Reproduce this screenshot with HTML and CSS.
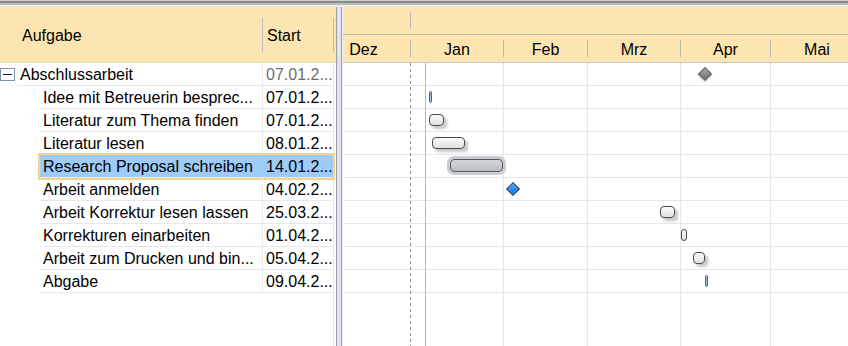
FILE: index.html
```html
<!DOCTYPE html>
<html lang="de">
<head>
    <meta charset="UTF-8">
    <title>Abschlussarbeit - Gantt</title>
    <link rel="stylesheet" href="styles.css">
</head>
<body>
    <div class="topbar"></div>
    <div class="main">
        <div class="left">
            <div class="lhead">
                <div class="hcell task">Aufgabe</div>
                <div class="hsep"></div>
                <div class="hcell start">Start</div>
                <div class="hsep"></div>
            </div>
            <div class="lbody">
                <div class="grid">
                    <div class="trow">
                        <div class="indent root"><span class="toggle"></span></div>
                        <div class="cells">
                            <div class="name">Abschlussarbeit</div>
                            <div class="date muted">07.01.2...</div>
                        </div>
                    </div>
                    <div class="trow">
                        <div class="indent"></div>
                        <div class="cells">
                            <div class="name">Idee mit Betreuerin besprec...</div>
                            <div class="date">07.01.2...</div>
                        </div>
                    </div>
                    <div class="trow">
                        <div class="indent"></div>
                        <div class="cells">
                            <div class="name">Literatur zum Thema finden</div>
                            <div class="date">07.01.2...</div>
                        </div>
                    </div>
                    <div class="trow">
                        <div class="indent"></div>
                        <div class="cells">
                            <div class="name">Literatur lesen</div>
                            <div class="date">08.01.2...</div>
                        </div>
                    </div>
                    <div class="trow selected">
                        <div class="indent"></div>
                        <div class="cells">
                            <div class="name">Research Proposal schreiben</div>
                            <div class="date">14.01.2...</div>
                        </div>
                    </div>
                    <div class="trow">
                        <div class="indent"></div>
                        <div class="cells">
                            <div class="name">Arbeit anmelden</div>
                            <div class="date">04.02.2...</div>
                        </div>
                    </div>
                    <div class="trow">
                        <div class="indent"></div>
                        <div class="cells">
                            <div class="name">Arbeit Korrektur lesen lassen</div>
                            <div class="date">25.03.2...</div>
                        </div>
                    </div>
                    <div class="trow">
                        <div class="indent"></div>
                        <div class="cells">
                            <div class="name">Korrekturen einarbeiten</div>
                            <div class="date">01.04.2...</div>
                        </div>
                    </div>
                    <div class="trow">
                        <div class="indent"></div>
                        <div class="cells">
                            <div class="name">Arbeit zum Drucken und bin...</div>
                            <div class="date">05.04.2...</div>
                        </div>
                    </div>
                    <div class="trow">
                        <div class="indent"></div>
                        <div class="cells">
                            <div class="name">Abgabe</div>
                            <div class="date">09.04.2...</div>
                        </div>
                    </div>
                </div>
            </div>
        </div>

        <div class="splitter"></div>

        <div class="right">
            <div class="rhead">
                <div class="scale-top">
                    <div class="year-pad"></div>
                    <div class="vsep"></div>
                </div>
                <div class="scale-months">
                    <div class="month" style="width:93px">Dez</div>
                    <div class="vsep"></div>
                    <div class="month" style="width:92px">Jan</div>
                    <div class="vsep"></div>
                    <div class="month" style="width:83px">Feb</div>
                    <div class="vsep"></div>
                    <div class="month" style="width:92px">Mrz</div>
                    <div class="vsep"></div>
                    <div class="month" style="width:89px">Apr</div>
                    <div class="vsep"></div>
                    <div class="month" style="width:92px">Mai</div>
                </div>
            </div>
            <div class="rbody">
                <div class="grow"><div class="ms summary" style="left:357px"></div></div>
                <div class="grow"><div class="bar thin" style="left:86px;width:3px"></div></div>
                <div class="grow"><div class="bar" style="left:86px;width:15px"></div></div>
                <div class="grow"><div class="bar" style="left:89px;width:33px"></div></div>
                <div class="grow"><div class="bar sel" style="left:107px;width:53px"></div></div>
                <div class="grow"><div class="ms blue" style="left:165px"></div></div>
                <div class="grow"><div class="bar" style="left:317px;width:15px"></div></div>
                <div class="grow"><div class="bar small" style="left:338px;width:6px"></div></div>
                <div class="grow"><div class="bar" style="left:350px;width:12px"></div></div>
                <div class="grow"><div class="bar thin" style="left:362px;width:3px"></div></div>

                <div class="vline dash" style="left:67px"></div>
                <div class="vline today" style="left:82px"></div>
                <div class="vline" style="left:160px"></div>
                <div class="vline" style="left:244px"></div>
                <div class="vline" style="left:337px"></div>
                <div class="vline" style="left:427px"></div>
            </div>
        </div>
    </div>
</body>
</html>
```

FILE: styles.css
```css
body {
    margin: 0;
    width: 848px;
    height: 346px;
    overflow: hidden;
    font-family: "Liberation Sans", Arial, sans-serif;
    font-size: 16px;
    color: #000;
    background: #fff;
}
.topbar {
    height: 7px;
    background: linear-gradient(to bottom, #d0d0d0 0 1px, #8a8a8a 1px 3px, #bdbdbd 3px 5px, #ececec 5px 7px);
}
.main {
    display: flex;
    height: 339px;
}

/* linke Tabelle */
.left {
    width: 336px;
    display: flex;
    flex-direction: column;
}
.lhead {
    height: 55px;
    border-bottom: 1px solid #e6dcc0;
    background: #fde5b1;
    display: flex;
    align-items: center;
}
.hcell {
    box-sizing: border-box;
    white-space: nowrap;
    padding-top: 2px;
}
.hcell.task {
    width: 262px;
    padding-left: 22px;
}
.hcell.start {
    width: 70px;
    padding-left: 4px;
}
.hsep {
    width: 1px;
    height: 34px;
    background: #bcbcbc;
}
.lbody {
    flex: 1;
}
.grid {
    width: 333px;
    height: 100%;
    border-right: 1px solid #e6e6e6;
}
.trow {
    display: flex;
    height: 23px;
}
.indent {
    width: 40px;
    flex: none;
}
.indent.root {
    width: 17px;
    display: flex;
    align-items: center;
}
.toggle {
    box-sizing: border-box;
    width: 15px;
    height: 13px;
    margin-top: -1px;
    border: 1px solid #8193ab;
    background: #fff;
    display: flex;
    align-items: center;
    justify-content: center;
}
.toggle::before {
    content: "";
    width: 9px;
    height: 1px;
    background: #222;
}
.cells {
    flex: 1;
    display: flex;
    box-sizing: border-box;
    border-bottom: 1px solid #e8e8e8;
}
.name {
    flex: 1;
    padding-top: 2px;
    padding-left: 3px;
    line-height: 20px;
    white-space: nowrap;
    overflow: hidden;
}
.date {
    width: 71px;
    box-sizing: border-box;
    border-left: 1px solid #ececec;
    padding-top: 2px;
    padding-left: 3px;
    line-height: 20px;
    white-space: nowrap;
    overflow: hidden;
}
.date.muted {
    color: #6e6e6e;
}
.trow.selected .cells {
    background: #9dcbfa;
    outline: 2px solid #f4d38a;
}
.trow.selected .date {
    border-left-color: #9dcbfa;
}

.splitter {
    width: 7px;
    flex: none;
    background: linear-gradient(to right, #9c9ca8 0 1px, #e3e3e9 1px 5px, #9c9ca8 5px 6px, #f2f2f5 6px 7px);
}

/* Gantt */
.right {
    flex: 1;
    display: flex;
    flex-direction: column;
    overflow: hidden;
}
.rhead {
    height: 55px;
    border-bottom: 1px solid #c4c4c4;
    background: #fde5b1;
}
.scale-top {
    height: 27px;
    border-bottom: 1px solid #b8b8b8;
    display: flex;
    align-items: center;
}
.year-pad {
    width: 67px;
}
.vsep {
    width: 1px;
    height: 17px;
    flex: none;
    background: #b8b8b8;
}
.scale-months {
    height: 27px;
    margin-left: -26px;
    display: flex;
    align-items: center;
}
.month {
    flex: none;
    padding-top: 2px;
    text-align: center;
    white-space: nowrap;
}
.rbody {
    flex: 1;
    position: relative;
    overflow: hidden;
}
.grow {
    height: 23px;
    box-sizing: border-box;
    border-bottom: 1px solid #e6e6ec;
    position: relative;
}
.vline {
    position: absolute;
    top: 0;
    bottom: 0;
    width: 1px;
    background: #e4e4ea;
    z-index: 1;
}
.vline.dash {
    background: repeating-linear-gradient(to bottom, #8c8c9c 0 3px, transparent 3px 6px);
}
.vline.today {
    background: #f0a868;
}
.bar {
    position: absolute;
    top: 5px;
    height: 12px;
    box-sizing: border-box;
    border: 1px solid #4a4a4a;
    border-radius: 4px;
    background: linear-gradient(to bottom, #fbfbfb, #e0e0e0);
    box-shadow: 3px 3px 3px rgba(0, 0, 0, 0.22);
    z-index: 2;
}
.bar.thin {
    border-radius: 2px;
    border-color: #56667e;
    background: #a3b7d6;
    box-shadow: none;
}
.bar.small {
    border-radius: 3px;
    box-shadow: none;
}
.bar.sel {
    top: 4px;
    height: 13px;
    border-color: #555;
    background: linear-gradient(to bottom, #d2d5da, #babdc3);
    box-shadow: 0 0 0 3px #c9ccd2;
}
.ms {
    position: absolute;
    top: 6px;
    width: 10px;
    height: 10px;
    box-sizing: border-box;
    transform: rotate(45deg);
    z-index: 2;
}
.ms.summary {
    border: 1px solid #3a3a3a;
    background: linear-gradient(135deg, #a8a8a8, #6c6c6c);
    box-shadow: 1px 1px 2px rgba(0, 0, 0, 0.2);
}
.ms.blue {
    border: 1px solid #14203c;
    background: linear-gradient(135deg, #4aa6ff, #0a78f0);
}
```
